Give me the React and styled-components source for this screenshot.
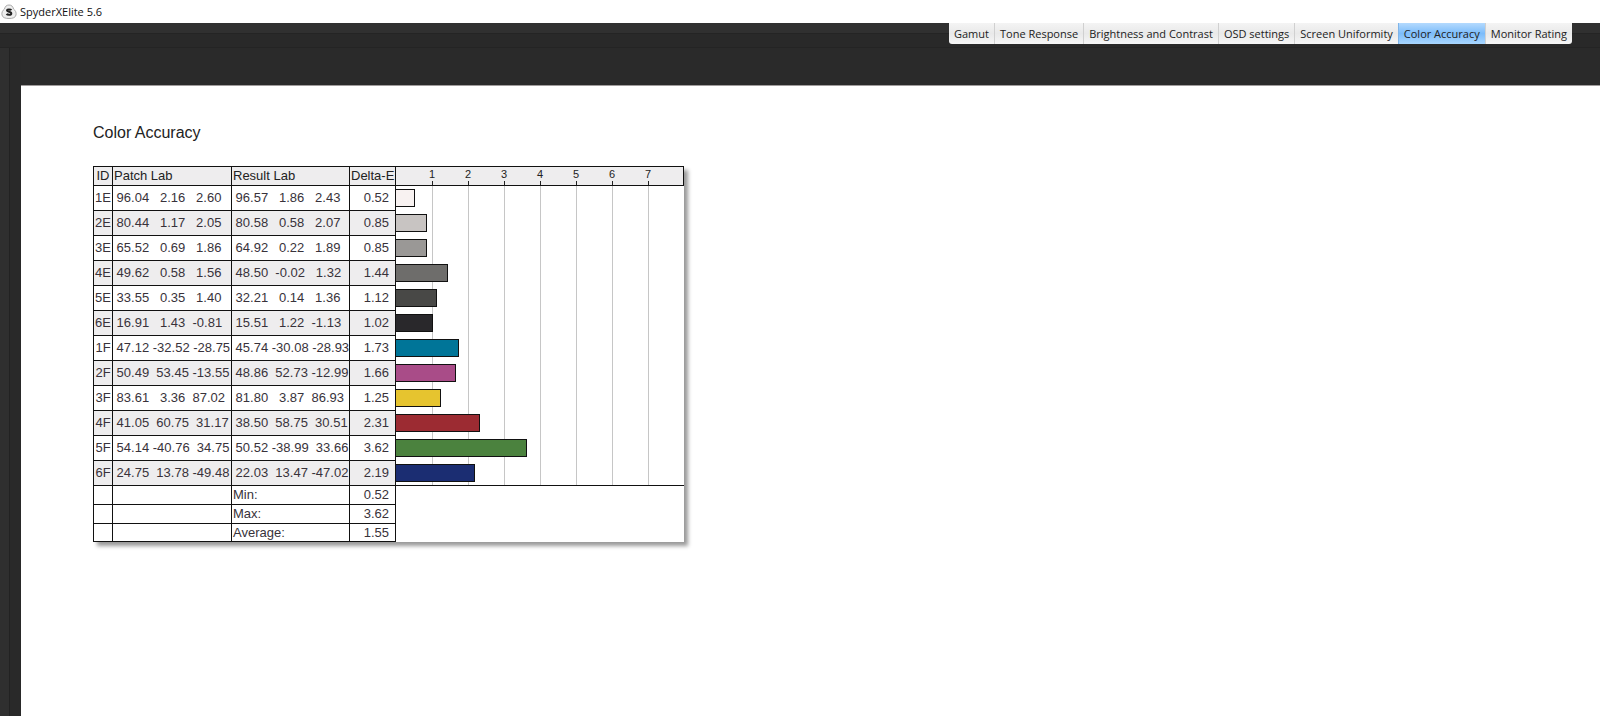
import React, { useState } from 'react';
import styled, { createGlobalStyle } from 'styled-components';

const GlobalStyle = createGlobalStyle`
    * {
        box-sizing: border-box;
    }
    body {
        margin: 0;
        background: #2a2a2a;
    }
`;

const UNIT = 36;

const tabs = [
    'Gamut',
    'Tone Response',
    'Brightness and Contrast',
    'OSD settings',
    'Screen Uniformity',
    'Color Accuracy',
    'Monitor Rating',
];

const patches = [
    { id: '1E', patch: [96.04, 2.16, 2.6], result: [96.57, 1.86, 2.43], delta: 0.52, color: '#f8f2f1' },
    { id: '2E', patch: [80.44, 1.17, 2.05], result: [80.58, 0.58, 2.07], delta: 0.85, color: '#c8c4c2' },
    { id: '3E', patch: [65.52, 0.69, 1.86], result: [64.92, 0.22, 1.89], delta: 0.85, color: '#9a9896' },
    { id: '4E', patch: [49.62, 0.58, 1.56], result: [48.5, -0.02, 1.32], delta: 1.44, color: '#6e6d6b' },
    { id: '5E', patch: [33.55, 0.35, 1.4], result: [32.21, 0.14, 1.36], delta: 1.12, color: '#484846' },
    { id: '6E', patch: [16.91, 1.43, -0.81], result: [15.51, 1.22, -1.13], delta: 1.02, color: '#29282b' },
    { id: '1F', patch: [47.12, -32.52, -28.75], result: [45.74, -30.08, -28.93], delta: 1.73, color: '#007598' },
    { id: '2F', patch: [50.49, 53.45, -13.55], result: [48.86, 52.73, -12.99], delta: 1.66, color: '#a94c88' },
    { id: '3F', patch: [83.61, 3.36, 87.02], result: [81.8, 3.87, 86.93], delta: 1.25, color: '#e6c42f' },
    { id: '4F', patch: [41.05, 60.75, 31.17], result: [38.5, 58.75, 30.51], delta: 2.31, color: '#9c2b32' },
    { id: '5F', patch: [54.14, -40.76, 34.75], result: [50.52, -38.99, 33.66], delta: 3.62, color: '#4b823e' },
    { id: '6F', patch: [24.75, 13.78, -49.48], result: [22.03, 13.47, -47.02], delta: 2.19, color: '#1b2d72' },
];

const summary = [
    { label: 'Min:', value: 0.52 },
    { label: 'Max:', value: 3.62 },
    { label: 'Average:', value: 1.55 },
];

const Window = styled.div`
    display: flex;
    flex-direction: column;
    min-height: 100vh;
    font-family: 'Open Sans', 'Noto Sans', sans-serif;
`;

const TitleBar = styled.header`
    display: flex;
    align-items: center;
    gap: 3px;
    height: 23px;
    padding-left: 1px;
    background: #fff;
    color: #111;
    font-size: 11px;
    line-height: 16px;
`;

const TabStrip = styled.nav`
    display: flex;
    justify-content: flex-end;
    height: 25px;
    padding-right: 28px;
    background: linear-gradient(#303030 0 10px, #242424 10px 11px, #292929 11px 24px, #242424 24px);
`;

const TabGroup = styled.div`
    display: flex;
    height: 21px;
    border-radius: 0 0 3px 3px;
    overflow: hidden;
`;

const Tab = styled.button`
    border: 0;
    border-left: 1px solid ${({ $active }) => ($active ? '#7fb4e8' : '#d0d0d0')};
    padding: 0 5px;
    background: ${({ $active }) =>
        $active ? 'linear-gradient(#b4dafe, #7cbcfa 50%, #a8d6ff)' : 'linear-gradient(#f4f4f4, #e9e9e9 50%, #f6f6f6)'};
    color: #222;
    font-family: inherit;
    font-size: 11px;
    line-height: 20px;
    white-space: nowrap;

    &:first-child {
        border-left: 0;
    }
`;

const Workspace = styled.div`
    display: flex;
    flex: 1;
`;

const Gutter = styled.div`
    width: 21px;
    background: linear-gradient(to right, #2f2f2f 0 9px, #222 9px 10px, #292929 10px);
`;

const Page = styled.main`
    flex: 1;
    margin-top: 37px;
    padding: 37px 72px;
    border-top: 1px solid #a09c9c;
    background: #fff;
    font-family: 'Liberation Sans', Arial, sans-serif;
`;

const Heading = styled.h1`
    margin: 0 0 23px;
    color: #222;
    font-size: 16px;
    font-weight: 400;
    line-height: 20px;
`;

const Report = styled.table`
    width: 591px;
    table-layout: fixed;
    border-collapse: separate;
    border-spacing: 0;
    background: #fff;
    box-shadow: 4px 4px 4px rgba(0, 0, 0, 0.4);
    color: #38323a;
    font-size: 13px;
    line-height: 16px;
`;

const Column = styled.col`
    width: ${({ $width }) => $width};
`;

const HeadRow = styled.tr`
    height: 19px;
    background: #eeedee;
`;

const PatchRow = styled.tr`
    height: 25px;
    background: ${({ $shaded }) => ($shaded ? '#eeedee' : '#fff')};
`;

const SummaryRow = styled.tr`
    height: 19px;

    &:last-child > td {
        border-bottom: 1px solid #111;
    }
    &:last-child > td:last-child {
        border-bottom: 0;
    }
`;

const HeadCell = styled.th`
    padding: 0 1px;
    border-top: 1px solid #111;
    border-left: 1px solid #111;
    color: #222;
    font-weight: 400;
    text-align: ${({ $align }) => $align || 'left'};
    white-space: nowrap;
`;

const Cell = styled.td`
    padding: 0 ${({ $align }) => ($align === 'right' ? '6px' : '1px')};
    border-top: 1px solid #111;
    border-left: 1px solid #111;
    text-align: ${({ $align }) => $align || 'left'};
    white-space: pre;
`;

const LabCell = styled(Cell)`
    padding: 0;
`;

const AxisCell = styled.th`
    padding: 0 0 0 18px;
    border: 1px solid #111;
    border-bottom: 0;
    background: repeating-linear-gradient(to right, #222 0 1px, transparent 1px ${UNIT}px) ${UNIT}px 100% / 100% 4px no-repeat;
    vertical-align: top;
`;

const AxisLabels = styled.div`
    display: flex;
    color: #222;
    font-size: 11px;
    font-weight: 400;
    line-height: 14px;
`;

const AxisLabel = styled.span`
    width: ${UNIT}px;
    text-align: center;
`;

const ChartCell = styled.td`
    padding: 0;
    border-left: 1px solid #111;
    border-top: ${({ $first }) => ($first ? '1px solid #111' : '0')};
    background: repeating-linear-gradient(to right, #c6c6c6 0 1px, transparent 1px ${UNIT}px) ${UNIT}px 0 no-repeat #fff;
`;

const Bar = styled.div`
    height: 18px;
    margin-top: ${({ $first }) => ($first ? '0' : '1px')};
    border: 1px solid #111;
    border-left: 0;
`;

const BlankCell = styled.td`
    padding: 0;
    border-left: 1px solid #111;
    border-top: ${({ $first }) => ($first ? '1px solid #111' : '0')};
`;

const formatLab = (values) => values.map((value) => value.toFixed(2).padStart(6)).join(' ');

const Logo = () => (
    <svg width="16" height="16" viewBox="0 0 16 16" aria-hidden="true">
        <path
            d="M8 1 C10.500 1 12 2.500 12.500 5 C14.500 6.500 15.500 8.500 15 11 C14.500 13.500 12 14.500 8 14.500 C4 14.500 1.500 13.500 1 11 C0.500 8.500 1.500 6.500 3.500 5 C4 2.500 5.500 1 8 1 Z"
            fill="#eee"
            stroke="#aaa"
        />
        <path
            d="M10.300 6.200 C9.800 5.300 6 4.800 6 6.600 C6 8.300 10.300 7.300 10.300 9.400 C10.300 11.400 6.300 11 5.600 9.900"
            fill="none"
            stroke="#222"
            strokeWidth="2"
        />
    </svg>
);

const App = () => {
    const [active, setActive] = useState('Color Accuracy');

    return (
        <Window>
            <GlobalStyle />
            <TitleBar>
                <Logo />
                <span>SpyderXElite 5.6</span>
            </TitleBar>
            <TabStrip>
                <TabGroup>
                    {tabs.map((tab) => (
                        <Tab key={tab} type="button" $active={tab === active} onClick={() => setActive(tab)}>
                            {tab}
                        </Tab>
                    ))}
                </TabGroup>
            </TabStrip>
            <Workspace>
                <Gutter />
                <Page>
                    <Heading>Color Accuracy</Heading>
                    <Report>
                        <colgroup>
                            <Column $width="19px" />
                            <Column $width="119px" />
                            <Column $width="118px" />
                            <Column $width="46px" />
                            <Column $width="auto" />
                        </colgroup>
                        <thead>
                            <HeadRow>
                                <HeadCell $align="center">ID</HeadCell>
                                <HeadCell>Patch Lab</HeadCell>
                                <HeadCell>Result Lab</HeadCell>
                                <HeadCell>Delta-E</HeadCell>
                                <AxisCell>
                                    <AxisLabels>
                                        {[1, 2, 3, 4, 5, 6, 7].map((n) => (
                                            <AxisLabel key={n}>{n}</AxisLabel>
                                        ))}
                                    </AxisLabels>
                                </AxisCell>
                            </HeadRow>
                        </thead>
                        <tbody>
                            {patches.map((item, index) => (
                                <PatchRow key={item.id} $shaded={index % 2 === 1}>
                                    <Cell $align="center">{item.id}</Cell>
                                    <LabCell>{formatLab(item.patch)}</LabCell>
                                    <LabCell>{formatLab(item.result)}</LabCell>
                                    <Cell $align="right">{item.delta.toFixed(2)}</Cell>
                                    <ChartCell $first={index === 0}>
                                        <Bar
                                            $first={index === 0}
                                            style={{ width: Math.ceil(item.delta * UNIT), background: item.color }}
                                        />
                                    </ChartCell>
                                </PatchRow>
                            ))}
                        </tbody>
                        <tfoot>
                            {summary.map((item, index) => (
                                <SummaryRow key={item.label}>
                                    <Cell />
                                    <Cell />
                                    <Cell>{item.label}</Cell>
                                    <Cell $align="right">{item.value.toFixed(2)}</Cell>
                                    <BlankCell $first={index === 0} />
                                </SummaryRow>
                            ))}
                        </tfoot>
                    </Report>
                </Page>
            </Workspace>
        </Window>
    );
};

export default App;
